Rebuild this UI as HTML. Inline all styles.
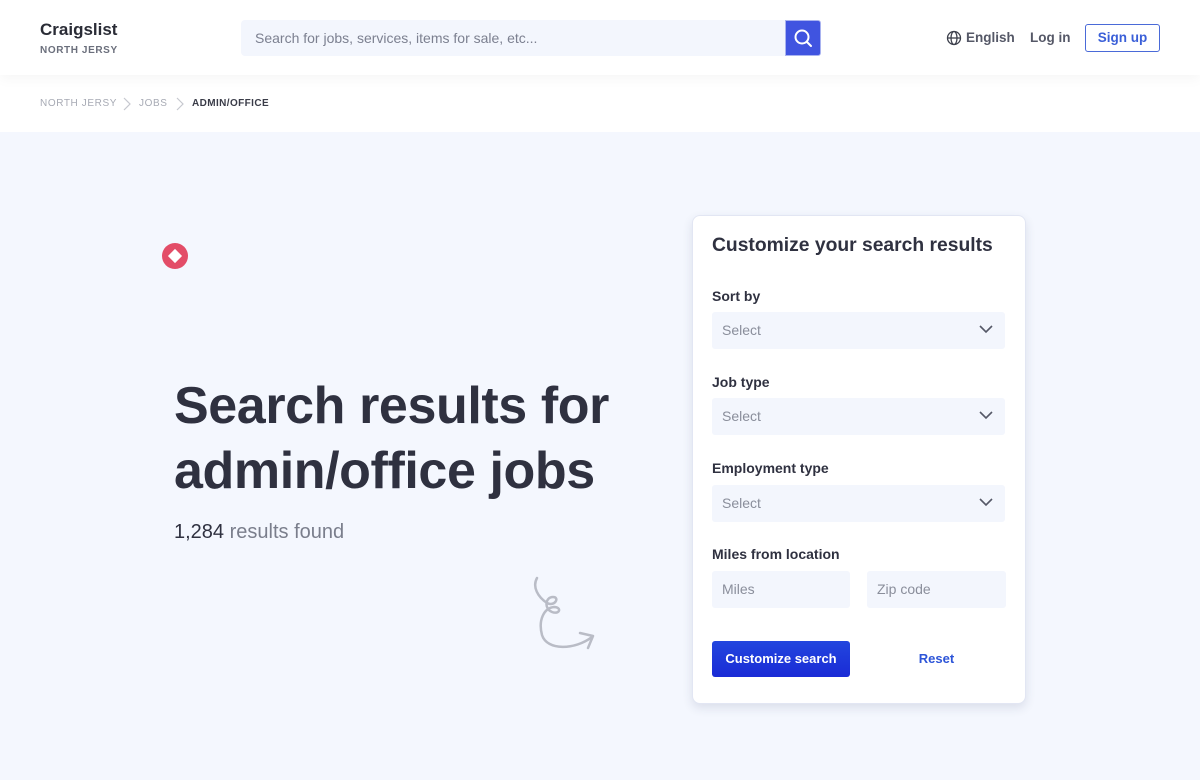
<!DOCTYPE html>
<html><head><meta charset="utf-8"><style>
*{box-sizing:border-box;margin:0;padding:0}
body{width:1200px;height:780px;overflow:hidden;background:#f4f7fe;font-family:"Liberation Sans",sans-serif;color:#2f3140;position:relative}
.abs{position:absolute}
header{position:absolute;left:0;top:0;width:1200px;height:75px;background:#fff;box-shadow:0 4px 12px rgba(0,0,0,.04);z-index:2}
.crumbs{position:absolute;left:0;top:75px;width:1200px;height:57px;background:#fff}
.sel{position:absolute;left:19px;width:293px;height:37px;background:#f3f6fd;border-radius:3px;font-size:14px;color:#8a8e9b;padding:10px 10px}
.sel svg{position:absolute;right:12px;top:12px}
.lbl{position:absolute;left:19px;font-size:14px;font-weight:bold;color:#2f3140}
</style></head><body>
<header>
<div class="abs" style="left:40px;top:20px;font-size:17px;font-weight:bold;color:#2a2c36">Craigslist</div>
<div class="abs" style="left:40px;top:45px;font-size:10px;font-weight:bold;color:#6b6f7c;letter-spacing:.6px">NORTH JERSY</div>
<div class="abs" style="left:241px;top:20px;width:545px;height:36px;background:#f3f6fd;border-radius:4px 0 0 4px;font-size:14px;color:#7c8090;padding:10px 14px">Search for jobs, services, items for sale, etc...</div>
<div class="abs" style="left:785px;top:20px;width:36px;height:36px;background:#4054e0;border-radius:0 3px 3px 0;border:1px solid #a9b3f0">
<svg width="34" height="34" viewBox="0 0 34 34"><circle cx="16" cy="16" r="6.5" fill="none" stroke="#fff" stroke-width="2"/><path d="M21 21l4 4" stroke="#fff" stroke-width="2" stroke-linecap="round"/></svg></div>
<svg class="abs" style="left:946px;top:30px" width="16" height="16" viewBox="0 0 16 16" fill="none" stroke="#3d404c" stroke-width="1.3"><circle cx="8" cy="8" r="6.5"/><ellipse cx="8" cy="8" rx="3" ry="6.5"/><path d="M1.5 8h13"/></svg>
<div class="abs" style="left:966px;top:30px;font-size:13.5px;font-weight:bold;color:#555867">English</div>
<div class="abs" style="left:1030px;top:30px;font-size:13.5px;font-weight:bold;color:#555867">Log in</div>
<div class="abs" style="left:1085px;top:24px;width:75px;height:28px;border:1px solid #4a6ad8;border-radius:3px;font-size:13.5px;font-weight:bold;color:#3a5fd8;text-align:center;line-height:26px">Sign up</div>
</header>
<div class="crumbs">
<div class="abs" style="left:40px;top:23px;font-size:10px;letter-spacing:.6px;color:#a7aab4;white-space:nowrap">NORTH JERSY</div>
<svg class="abs" style="left:123px;top:22px" width="8" height="14" viewBox="0 0 8 14"><path d="M1 1l6 6-6 6" fill="none" stroke="#c6c8cf" stroke-width="1.2"/></svg>
<div class="abs" style="left:139px;top:23px;font-size:10px;letter-spacing:.6px;color:#a7aab4">JOBS</div>
<svg class="abs" style="left:176px;top:22px" width="8" height="14" viewBox="0 0 8 14"><path d="M1 1l6 6-6 6" fill="none" stroke="#c6c8cf" stroke-width="1.2"/></svg>
<div class="abs" style="left:192px;top:23px;font-size:10px;letter-spacing:.4px;color:#3a3c48;font-weight:bold">ADMIN/OFFICE</div>
</div>
<div class="abs" style="left:162px;top:243px;width:26px;height:26px;border-radius:50%;background:#e34d68"><div style="position:absolute;left:8px;top:8px;width:10px;height:10px;background:#fff;transform:rotate(45deg)"></div></div>
<div class="abs" style="left:174px;top:374px;font-size:52px;font-weight:bold;line-height:65px;color:#2f3140;letter-spacing:-.4px">Search results for<br>admin/office jobs</div>
<div class="abs" style="left:174px;top:521px;font-size:20px;color:#7a7e8c"><span style="color:#2f3140">1,284</span> results found</div>
<svg class="abs" style="left:530px;top:575px" width="70" height="80" viewBox="0 0 70 80" fill="none" stroke="#b9bcc6" stroke-width="2.5" stroke-linecap="round" stroke-linejoin="round"><path d="M7 3C2 12 8 22 17 28C25 32 30 22 23 22C15 22 14 34 22 37C30 40 32 32 24 32C14 33 8 45 12 60C17 76 45 75 62 62"/><path d="M50 58L63 61L58 73"/></svg>
<div class="abs" style="left:692px;top:215px;width:334px;height:489px;background:#fff;border:1px solid #e2e6f3;border-radius:8px;box-shadow:0 4px 10px rgba(40,50,90,.12)">
<div class="abs" style="left:19px;top:19px;font-size:19.3px;font-weight:bold;color:#2f3140">Customize your search results</div>
<div class="lbl" style="top:72px">Sort by</div>
<div class="sel" style="top:96px">Select<svg width="14" height="10" viewBox="0 0 14 10"><path d="M1 2l6 6 6-6" fill="none" stroke="#555867" stroke-width="1.6"/></svg></div>
<div class="lbl" style="top:158px">Job type</div>
<div class="sel" style="top:182px">Select<svg width="14" height="10" viewBox="0 0 14 10"><path d="M1 2l6 6 6-6" fill="none" stroke="#555867" stroke-width="1.6"/></svg></div>
<div class="lbl" style="top:244px">Employment type</div>
<div class="sel" style="top:269px">Select<svg width="14" height="10" viewBox="0 0 14 10"><path d="M1 2l6 6 6-6" fill="none" stroke="#555867" stroke-width="1.6"/></svg></div>
<div class="lbl" style="top:330px">Miles from location</div>
<div class="sel" style="top:355px;width:138px">Miles</div>
<div class="sel" style="top:355px;left:174px;width:139px">Zip code</div>
<div class="abs" style="left:19px;top:425px;width:138px;height:36px;background:linear-gradient(#2246de,#1a2bd6);border-radius:3px;color:#fff;font-size:13px;font-weight:bold;text-align:center;line-height:36px">Customize search</div>
<div class="abs" style="left:174px;top:425px;width:139px;height:36px;color:#2d55d8;font-size:13px;font-weight:bold;text-align:center;line-height:36px">Reset</div>
</div>
</body></html>
